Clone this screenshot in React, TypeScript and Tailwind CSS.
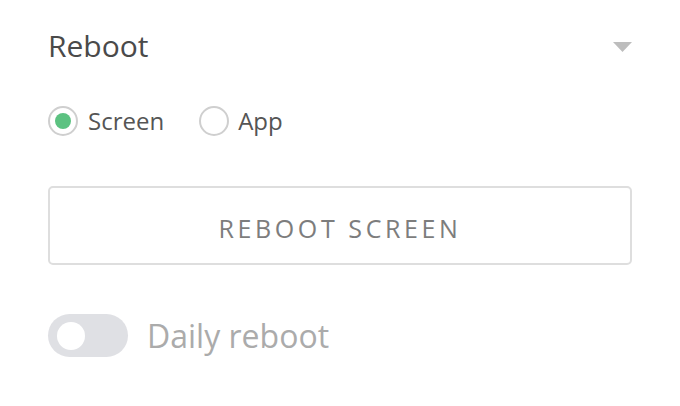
import React from "react";

export default function App() {
  return (
    <div
      className="w-[680px] h-[406px] bg-white overflow-hidden"
      style={{ fontFamily: '"Open Sans", "Liberation Sans", sans-serif' }}
    >
      <div className="px-12 pt-[28px]">
        <div className="flex items-center justify-between h-[36px]">
          <span className="text-[30px] leading-[36px] text-[#4a4a4a]">Reboot</span>
          <svg width="19" height="10" viewBox="0 0 19 10" className="mr-0 mt-[2px]">
            <polygon points="0,0 19,0 9.5,10" fill="#bdbdbd" />
          </svg>
        </div>

        <div className="mt-[42px] flex items-center h-[30px]">
          <div className="flex items-center">
            <span className="w-[30px] h-[30px] rounded-full border-2 border-[#cfcfcf] flex items-center justify-center">
              <span className="w-[16px] h-[16px] rounded-full bg-[#5cc281]" />
            </span>
            <span className="ml-[10px] text-[24px] leading-[30px] text-[#555555]">Screen</span>
          </div>
          <div className="flex items-center ml-[35px]">
            <span className="w-[30px] h-[30px] rounded-full border-2 border-[#cfcfcf]" />
            <span className="ml-[9px] text-[24px] leading-[30px] text-[#555555]">App</span>
          </div>
        </div>

        <button className="mt-[50px] w-full h-[79px] border-2 border-[#dedede] rounded-[5px] bg-white flex items-center justify-center">
          <span className="pt-[6px] text-[25px] tracking-[3.6px] text-[#7d7d7d] leading-none">REBOOT SCREEN</span>
        </button>

        <div className="mt-[49px] flex items-center h-[43px]">
          <div className="w-[80px] h-[43px] rounded-full bg-[#dfe0e4] flex items-center pl-[9px]">
            <span className="w-[28px] h-[28px] rounded-full bg-white" />
          </div>
          <span className="ml-[19px] text-[32px] leading-[43px] text-[#ababab]">Daily reboot</span>
        </div>
      </div>
    </div>
  );
}
